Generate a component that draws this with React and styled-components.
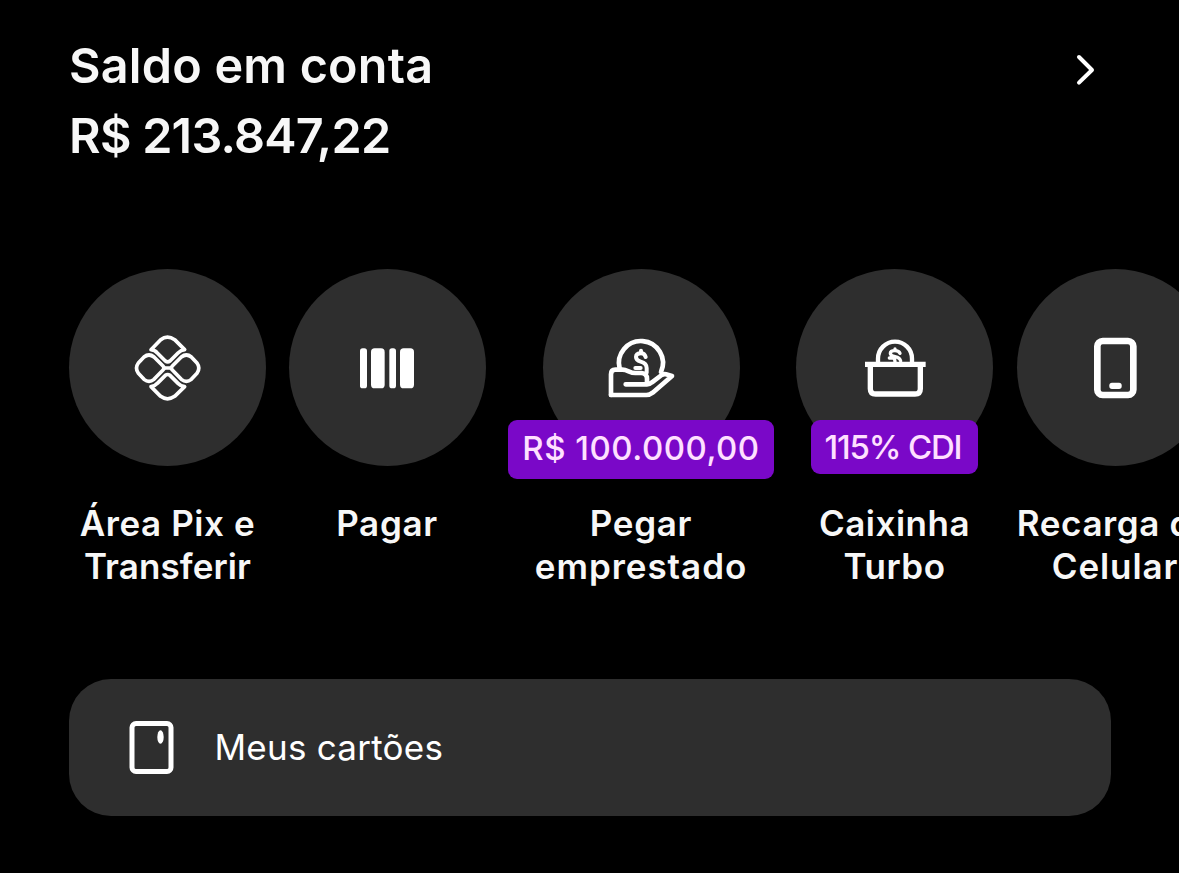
import React from 'react';
import styled, {createGlobalStyle} from 'styled-components';

const GlobalStyle = createGlobalStyle`
    * {
        box-sizing: border-box;
    }

    body {
        margin: 0;
        background: #000;
        color: #f7f7f7;
        font-family: Inter, "Liberation Sans", sans-serif;
        overflow: hidden;
    }
`;

const Page = styled.main`
    width: 1179px;
    height: 873px;
    padding: 31px 68px 0 69px;
    overflow: hidden;
    background: #000;
`;

const AccountHeader = styled.header`
    display: flex;
    justify-content: space-between;
    height: 238px;
`;

const Balance = styled.div`
    font-size: 48.5px;
    font-weight: 600;
    line-height: 70px;
    white-space: nowrap;
`;

const BalanceLine = styled.div`
    letter-spacing: ${props => props.$spacing}px;
`;

const Chevron = styled.svg`
    display: block;
    width: 50px;
    height: 50px;
    margin: 14px 1px 0 0;
`;

const Actions = styled.nav`
    display: flex;
    align-items: flex-start;
    gap: 22.5px;
    height: 410px;
`;

const Action = styled.div`
    position: relative;
    flex: none;
    display: flex;
    flex-direction: column;
    align-items: center;
    width: ${props => props.$width || 197}px;
    margin-right: ${props => props.$after || 0}px;
`;

const Circle = styled.div`
    display: flex;
    align-items: center;
    justify-content: center;
    width: 197px;
    height: 197px;
    border-radius: 50%;
    background: #2e2e2e;
    color: #fff;
`;

const Icon = styled.svg`
    flex: none;
    display: block;
    fill: none;
    stroke: currentColor;
    stroke-linecap: round;
    stroke-linejoin: round;
`;

const SolidIcon = styled(Icon)`
    fill: currentColor;
    stroke: none;
`;

//원 아래쪽에 겹치는 보라색 배지
const Badge = styled.div`
    position: absolute;
    top: 151px;
    width: ${props => props.$width}px;
    height: ${props => props.$height}px;
    padding-right: ${props => props.$shift || 0}px;
    line-height: ${props => props.$line}px;
    border-radius: 9px;
    background: #7a08c8;
    color: #ffe0ff;
    font-size: 33px;
    font-weight: 500;
    letter-spacing: ${props => props.$spacing}px;
    text-align: center;
    white-space: nowrap;
`;

const Label = styled.div`
    margin-top: 36px;
    font-size: 35px;
    font-weight: 600;
    line-height: 43.2px;
    text-align: center;
    white-space: nowrap;
`;

const LabelLine = styled.div`
    letter-spacing: ${props => props.$spacing || 0}px;
`;

const CardsButton = styled.div`
    display: flex;
    align-items: center;
    width: 1042px;
    height: 137px;
    padding-left: 56px;
    border-radius: 42px;
    background: #2e2e2e;
    color: #fff;
`;

const CardsText = styled.span`
    margin: -1px 0 0 39.5px;
    font-size: 35px;
    font-weight: 400;
    letter-spacing: 0.25px;
`;

const PixIcon = () => (
    <Icon width="86" height="86" viewBox="0 -1 258 258" strokeWidth="11">
        <path d="M78 73 L107 43 Q127 28 149 43 L179 73 Q168 74 159 83 L135 107 Q128 112 121 107 L97 83 Q89 74 78 73 Z"/>
        <path d="M78 184 L107 213 Q127 228 149 213 L179 184 Q168 183 159 174 L135 150 Q128 145 121 150 L97 174 Q89 183 78 184 Z"/>
        <path d="M40 113 L57 95 Q72 83 87 95 L114 122 Q120 128 114 134 L87 162 Q72 174 57 162 L40 144 Q29 128 40 113 Z"/>
        <path d="M216 113 L199 95 Q184 83 169 95 L142 122 Q136 128 142 134 L169 162 Q184 174 199 162 L216 144 Q227 128 216 113 Z"/>
        <path d="M118 128 H138"/>
    </Icon>
);

const BarcodeIcon = () => (
    <SolidIcon width="86" height="86" viewBox="-3 -1 258 258">
        <rect x="45" y="69" width="21" height="120" rx="8"/>
        <rect x="78" y="69" width="41" height="120" rx="11"/>
        <rect x="133" y="69" width="20" height="120" rx="8"/>
        <rect x="165" y="69" width="42" height="120" rx="11"/>
    </SolidIcon>
);

const LoanIcon = () => (
    <Icon width="90" height="86" viewBox="-3 -1 270 258" strokeWidth="14">
        <path d="M68 130 A66 66 0 1 1 192 140"/>
        <path d="M42 209 V147 Q42 133 55 133 H76 C92 133 98 143 115 143 H133 Q150 145 150 160 V171"/>
        <path d="M86 177 H150 Q158 177 165 171 L194 149 Q200 145 207 147 L225 152 L167 202 Q158 209 148 209 H42"/>
        <path d="M146 95 Q143 84 132 84 Q117 84 117 95 Q117 105 131 109 Q149 114 149 128 V142 M132 76 V84 M115 128 H131" strokeWidth="12"/>
    </Icon>
);

const BoxIcon = () => (
    <Icon width="90" height="86" viewBox="-1 -1 270 258" strokeWidth="13">
        <path d="M83 114 V100 A51 51 0 0 1 185 100 V114"/>
        <path d="M44 117 H226" strokeWidth="16" strokeLinecap="butt"/>
        <path d="M60 118 V190 Q60 206 76 206 H194 Q210 206 210 190 V118" strokeWidth="16"/>
        <path d="M149 84 Q146 76 134 76 Q120 76 120 84 Q120 91 134 94 Q149 97 151 107 M134 71 V76 M117 98 H128 Q134 99 134 110" strokeWidth="10"/>
    </Icon>
);

const PhoneIcon = () => (
    <Icon width="80" height="86" viewBox="0 -1 240 258" strokeWidth="20">
        <rect x="67" y="47" width="108" height="162" rx="16"/>
        <rect x="103" y="172" width="37" height="19" rx="8" fill="currentColor" stroke="none"/>
    </Icon>
);

const CardIcon = () => (
    <Icon width="50" height="58" viewBox="0 0 50 58" strokeWidth="5">
        <rect x="7" y="4.5" width="39" height="48" rx="4"/>
        <ellipse cx="35.5" cy="18" rx="3.2" ry="6.8" fill="currentColor" stroke="none"/>
    </Icon>
);

const actions = [
    {icon: <PixIcon/>, lines: [['Área Pix e', 0.6], ['Transferir', 0.1]]},
    {icon: <BarcodeIcon/>, lines: [['Pagar', 0.7]]},
    {
        icon: <LoanIcon/>,
        width: 266,
        after: -0.5,
        badge: {text: 'R$ 100.000,00', width: 266, height: 59, line: 57, spacing: 0.5},
        lines: [['Pegar', 0.7], ['emprestado', 0.95]],
    },
    {
        icon: <BoxIcon/>,
        after: 1,
        badge: {text: '115% CDI', width: 167, height: 54, line: 54, spacing: -1.2, shift: 3},
        lines: [['Caixinha', 0.5], ['Turbo', 0.5]],
    },
    {icon: <PhoneIcon/>, lines: [['Recarga de', 0.6], ['Celular', 0.9]]},
];

const App = () => {
    return (
        <>
            <GlobalStyle/>
            <Page>
                <AccountHeader>
                    <Balance>
                        <BalanceLine $spacing={0.22}>Saldo em conta</BalanceLine>
                        <BalanceLine $spacing={-0.75}>R$ 213.847,22</BalanceLine>
                    </Balance>
                    <Chevron viewBox="0 0 150 150" fill="none" stroke="#fff" strokeWidth="12">
                        <path d="M57 36 L96 75 L57 113" strokeLinecap="round" strokeLinejoin="round"/>
                    </Chevron>
                </AccountHeader>
                <Actions>
                    {actions.map(({icon, width, after, badge, lines}) => (
                        <Action key={lines[0][0]} $width={width} $after={after}>
                            <Circle>{icon}</Circle>
                            {badge && (
                                <Badge
                                    $width={badge.width}
                                    $height={badge.height}
                                    $line={badge.line}
                                    $spacing={badge.spacing}
                                    $shift={badge.shift}
                                >
                                    {badge.text}
                                </Badge>
                            )}
                            <Label>
                                {lines.map(([text, spacing]) => (
                                    <LabelLine key={text} $spacing={spacing}>{text}</LabelLine>
                                ))}
                            </Label>
                        </Action>
                    ))}
                </Actions>
                <CardsButton>
                    <CardIcon/>
                    <CardsText>Meus cartões</CardsText>
                </CardsButton>
            </Page>
        </>
    );
};

export default App;
